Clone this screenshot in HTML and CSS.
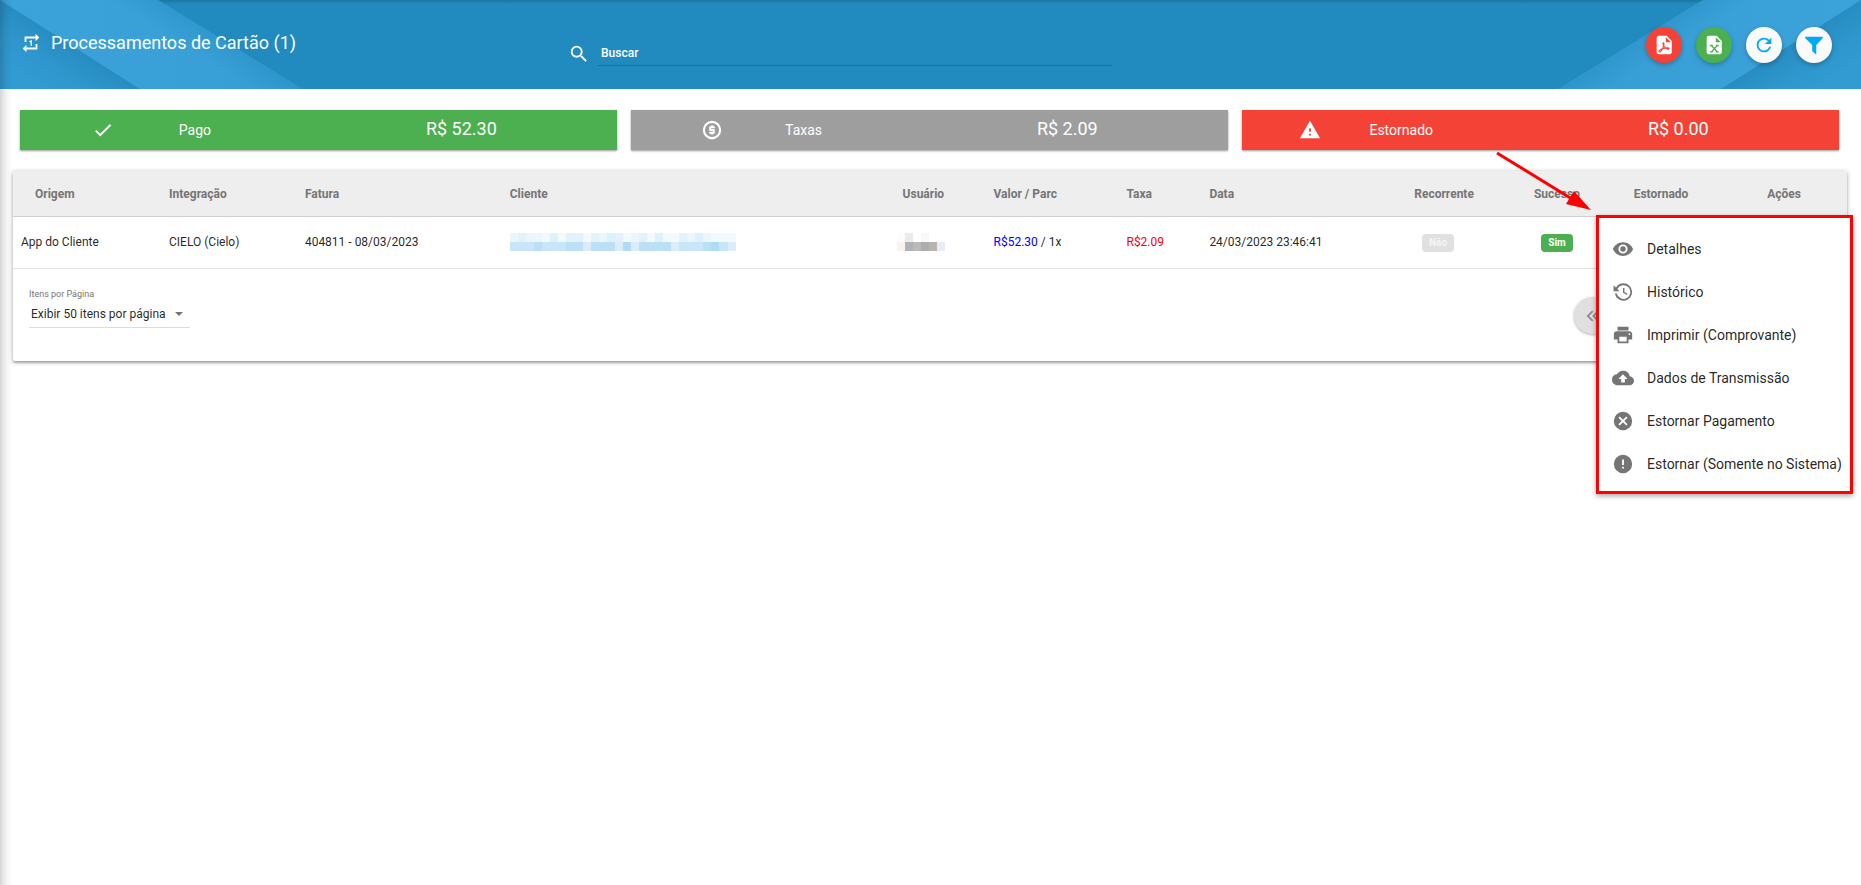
FILE: index.html
```html
<!DOCTYPE html>
<html lang="pt-BR">
<head>
<meta charset="utf-8">
<meta name="viewport" content="width=device-width, initial-scale=1">
<title>Processamentos de Cartão</title>
<link rel="stylesheet" href="styles.css">
</head>
<body>
<header class="topbar">
  <svg class="topbar-art topbar-art-left" viewBox="0 0 304 89" aria-hidden="true">
    <defs>
      <linearGradient id="band" gradientUnits="userSpaceOnUse" x1="0" y1="0" x2="304" y2="0">
        <stop offset="0" stop-color="#3ba3da"/><stop offset=".7" stop-color="#39a0d7"/><stop offset="1" stop-color="#349bd2"/>
      </linearGradient>
      <linearGradient id="corner" gradientUnits="userSpaceOnUse" x1="70" y1="44" x2="42" y2="88">
        <stop offset="0" stop-color="#278cc1"/><stop offset=".5" stop-color="#2e96cc"/><stop offset="1" stop-color="#319bd2"/>
      </linearGradient>
      <linearGradient id="edge" gradientUnits="userSpaceOnUse" x1="231" y1="44" x2="217" y2="67">
        <stop offset="0" stop-color="#238bc0" stop-opacity=".4"/><stop offset="1" stop-color="#238bc0" stop-opacity="0"/>
      </linearGradient>
    </defs>
    <path d="M0 0H158L303 89H0Z" fill="url(#band)"/>
    <path d="M158 0L303 89H0V0Z" fill="url(#edge)"/>
    <path d="M0 0L140 89H0Z" fill="url(#corner)"/>
  </svg>
  <svg class="topbar-art topbar-art-right" viewBox="0 0 304 89" aria-hidden="true">
    <path d="M0 0H158L303 89H0Z" fill="url(#band)"/>
    <path d="M158 0L303 89H0V0Z" fill="url(#edge)"/>
    <path d="M0 0L140 89H0Z" fill="url(#corner)"/>
  </svg>
  <div class="heading">
    <svg class="icon" viewBox="0 0 24 24" aria-hidden="true"><path d="M7 7h10v3l4-4-4-4v3H5v6h2V7zm10 10H7v-3l-4 4 4 4v-3h12v-6h-2v4zm-4-2V9h-1l-2 1v1h1.500v4H13z"/></svg>
    <h1 class="title">Processamentos de Cartão (1)</h1>
  </div>
  <div class="search">
    <svg class="icon" viewBox="0 0 24 24" aria-hidden="true"><path d="M15.500 14h-.79l-.28-.27A6.471 6.471 0 0 0 16 9.500 6.500 6.500 0 1 0 9.500 16c1.610 0 3.090-.59 4.230-1.570l.27.28v.79l5 4.990L20.490 19l-4.990-5zm-6 0C7.010 14 5 11.990 5 9.500S7.010 5 9.500 5 14 7.010 14 9.500 11.990 14 9.500 14z"/></svg>
    <input class="search-input" type="text" placeholder="Buscar" aria-label="Buscar">
  </div>
  <div class="actions">
    <button class="fab fab-red" type="button" aria-label="Exportar PDF">
      <svg class="icon" viewBox="0 0 24 24"><path fill="#fff" d="M6 2h9l5.500 5.500V20a2 2 0 0 1-2 2H6a2 2 0 0 1-2-2V4a2 2 0 0 1 2-2z"/><path fill="#f44336" d="M14 3.500V9h5.500z"/><path fill="none" stroke="#f44336" stroke-width="1.200" d="M7 19.500c-1.500-.8.500-2.600 4-3.600s6.500-1.100 6.600.1-3.400.5-5.300-2.200c-1.500-2.100-1.900-4.300-.9-4.300s.7 3.300-.9 6.200C9 18.500 7.800 20 7 19.500z"/></svg>
    </button>
    <button class="fab fab-green" type="button" aria-label="Exportar Excel">
      <svg class="icon" viewBox="0 0 24 24"><path fill="#fff" d="M6 2h9l5.500 5.500V20a2 2 0 0 1-2 2H6a2 2 0 0 1-2-2V4a2 2 0 0 1 2-2z"/><path fill="#4caf50" d="M14 3.500V9h5.500z"/><path fill="none" stroke="#4caf50" stroke-width="1.500" d="M7.500 12.500h3.200M14 12.500h3.200M7.500 19.500h3.200M14 19.500h3.200M9.300 12.500l6.300 7M15.600 12.500l-6.300 7"/></svg>
    </button>
    <button class="fab fab-white" type="button" aria-label="Atualizar">
      <svg class="icon" viewBox="0 0 24 24"><path d="M17.650 6.350A7.958 7.958 0 0 0 12 4a8 8 0 1 0 7.730 10h-2.080A5.990 5.990 0 0 1 12 18a6 6 0 1 1 0-12c1.660 0 3.140.69 4.220 1.780L13 11h7V4l-2.350 2.350z"/></svg>
    </button>
    <button class="fab fab-white" type="button" aria-label="Filtrar">
      <svg class="icon" viewBox="0 0 24 24"><path d="M2.500 3h19v1.500L14.500 12v10.500L10 18.500V12L2.500 4.500z"/></svg>
    </button>
  </div>
</header>

<main class="content">
  <section class="totals">
    <div class="total total-green">
      <div class="total-name">
        <span class="total-icon"><svg class="icon" viewBox="0 0 24 24" aria-hidden="true"><path d="M9 16.170L4.830 12l-1.420 1.410L9 19 21 7l-1.410-1.410z"/></svg></span>
        <span>Pago</span>
      </div>
      <div class="total-value">R$ 52.30</div>
    </div>
    <div class="total total-grey">
      <div class="total-name">
        <span class="total-icon"><svg class="icon" viewBox="0 0 24 24" aria-hidden="true"><path fill-rule="evenodd" d="M12 2a10 10 0 1 0 0 20 10 10 0 0 0 0-20zm0 2.300a7.700 7.700 0 1 1 0 15.400 7.700 7.700 0 0 1 0-15.400z"/><path d="M11 17v-1H9v-2.200h4.200v-.8H10a1 1 0 0 1-1-1V9a1 1 0 0 1 1-1h1V7h2.300v1H15v2.200h-4v.8h3a1 1 0 0 1 1 1v3a1 1 0 0 1-1 1h-.7v1H11z"/></svg></span>
        <span>Taxas</span>
      </div>
      <div class="total-value">R$ 2.09</div>
    </div>
    <div class="total total-red">
      <div class="total-name">
        <span class="total-icon"><svg class="icon" viewBox="0 0 24 24" aria-hidden="true"><path d="M1 21h22L12 2 1 21zm12-3h-2v-2h2v2zm0-4h-2v-4h2v4z"/></svg></span>
        <span>Estornado</span>
      </div>
      <div class="total-value">R$ 0.00</div>
    </div>
  </section>

  <section class="card">
    <table class="grid">
      <colgroup>
        <col class="col-origin"><col class="col-integration"><col class="col-invoice"><col class="col-client">
        <col class="col-user"><col class="col-amount"><col class="col-fee"><col class="col-date">
        <col class="col-recurring"><col class="col-success"><col class="col-refunded"><col class="col-actions">
      </colgroup>
      <thead>
        <tr>
          <th class="first">Origem</th><th>Integração</th><th>Fatura</th><th>Cliente</th><th>Usuário</th><th>Valor / Parc</th><th>Taxa</th><th>Data</th>
          <th class="center">Recorrente</th><th class="center">Sucesso</th><th class="center">Estornado</th><th class="center">Ações</th>
        </tr>
      </thead>
      <tbody>
        <tr>
          <td>App do Cliente</td>
          <td>CIELO (Cielo)</td>
          <td>404811 - 08/03/2023</td>
          <td>
            <svg class="mask" width="226" height="18" viewBox="0 0 226 18" shape-rendering="crispEdges" role="img" aria-label="Cliente oculto">
              <path fill="#ebf5fc" d="M0 0h226v9H0z"/>
              <path fill="#e2f1fb" d="M8 0h8v9H8zM56 0h17v9H56zM81 0h8v9h-8zM105 0h8v9h-8zM129 0h8v9h-8zM169 0h8v9h-8z"/>
              <path fill="#dbf1fb" d="M40 0h8v9h-8zM97 0h8v9h-8zM145 0h8v9h-8zM185 0h8v9h-8z"/>
              <path fill="#f3fafe" d="M32 0h8v9h-8zM48 0h8v9h-8zM73 0h8v9h-8zM113 0h8v9h-8zM137 0h8v9h-8zM153 0h16v9h-16zM201 0h25v9h-25z"/>
              <path fill="#c8e6f7" d="M0 9h226v9H0z"/>
              <path fill="#b9e0f5" d="M24 9h8v9h-8zM56 9h17v9H56zM89 9h8v9h-8zM145 9h16v9h-16zM193 9h8v9h-8z"/>
              <path fill="#bddff5" d="M81 9h8v9h-8zM97 9h8v9h-8zM129 9h16v9h-16z"/>
              <path fill="#dcedfa" d="M73 9h8v9h-8zM105 9h8v9h-8zM121 9h8v9h-8zM161 9h8v9h-8zM218 9h8v9h-8z"/>
              <path fill="#b0dbf5" d="M113 9h8v9h-8zM201 9h8v9h-8z"/>
            </svg>
          </td>
          <td>
            <svg class="mask mask-user" width="48" height="18" viewBox="0 0 48 18" shape-rendering="crispEdges" role="img" aria-label="Usuário oculto">
              <path fill="#fefbfa" d="M0 0h8v9H0z"/><path fill="#ebebec" d="M8 0h8v9H8z"/><path fill="#f8f8f8" d="M24 0h8v9h-8z"/>
              <path fill="#faf2ee" d="M0 9h8v9H0z"/><path fill="#b1b2b8" d="M8 9h8v9H8z"/><path fill="#bababa" d="M16 9h8v9h-8z"/>
              <path fill="#acacae" d="M24 9h8v9h-8z"/><path fill="#bab4ad" d="M32 9h8v9h-8z"/><path fill="#e9ecf7" d="M40 9h8v9h-8z"/>
            </svg>
          </td>
          <td><span class="amount">R$52.30</span> / 1x</td>
          <td class="fee">R$2.09</td>
          <td>24/03/2023 23:46:41</td>
          <td class="center recurring"><span class="badge badge-off">Não</span></td>
          <td class="center"><span class="badge badge-on">Sim</span></td>
          <td></td>
          <td></td>
        </tr>
      </tbody>
    </table>

    <footer class="pager">
      <div class="page-size">
        <label class="page-size-label" for="page-size">Itens por Página</label>
        <div class="page-size-box">
          <select class="page-size-select" id="page-size"><option>Exibir 50 itens por página</option></select>
          <span class="caret" aria-hidden="true"></span>
        </div>
      </div>
      <button class="page-first" type="button" aria-label="Primeira página">
        <svg class="icon" viewBox="0 0 24 24"><path d="M18.410 7.410L17 6l-6 6 6 6 1.410-1.410L13.830 12zM12.410 7.410L11 6l-6 6 6 6 1.410-1.410L7.830 12z"/></svg>
      </button>
    </footer>

    <svg class="pointer" width="110" height="70" viewBox="0 0 110 70" aria-hidden="true">
      <path d="M7 8L82 54" stroke="#f00" stroke-width="3"/><path d="M84 46L101 65L76 59z" fill="#f00"/>
    </svg>

    <div class="menu">
      <button class="menu-item" type="button"><svg class="icon" viewBox="0 0 24 24"><path d="M12 4.500C7 4.500 2.730 7.610 1 12c1.730 4.390 6 7.500 11 7.500s9.270-3.110 11-7.500c-1.730-4.390-6-7.500-11-7.500zM12 17a5 5 0 1 1 0-10 5 5 0 0 1 0 10zm0-8a3 3 0 1 0 0 6 3 3 0 0 0 0-6z"/></svg>Detalhes</button>
      <button class="menu-item" type="button"><svg class="icon" viewBox="0 0 24 24"><path d="M12.500 2.500a9.500 9.500 0 0 0-8.200 4.700L1.700 4.600V11.200h6.600L5.800 8.700a7.500 7.500 0 1 1-.6 5H3.100A9.500 9.500 0 1 0 12.500 2.500zM12 7.500v5.300l4.300 2.600.8-1.300-3.500-2.100V7.500z"/></svg>Histórico</button>
      <button class="menu-item" type="button"><svg class="icon" viewBox="0 0 24 24"><path d="M19 8H5c-1.660 0-3 1.340-3 3v6h4v4h12v-4h4v-6c0-1.660-1.340-3-3-3zm-3 11H8v-5h8v5zm3-7a1 1 0 1 1 0-2 1 1 0 0 1 0 2zm-1-9H6v4h12V3z"/></svg>Imprimir (Comprovante)</button>
      <button class="menu-item" type="button"><svg class="icon" viewBox="0 0 24 24"><path d="M19.350 10.040A7.490 7.490 0 0 0 12 4C9.110 4 6.600 5.640 5.350 8.040A5.994 5.994 0 0 0 0 14c0 3.310 2.690 6 6 6h13c2.760 0 5-2.240 5-5 0-2.640-2.050-4.780-4.650-4.960zM14 13v4h-4v-4H7l5-5 5 5h-3z"/></svg>Dados de Transmissão</button>
      <button class="menu-item" type="button"><svg class="icon" viewBox="0 0 24 24"><path d="M12 2a10 10 0 1 0 0 20 10 10 0 0 0 0-20zm5 13.590L15.590 17 12 13.410 8.410 17 7 15.590 10.590 12 7 8.410 8.410 7 12 10.590 15.590 7 17 8.410 13.410 12 17 15.590z"/></svg>Estornar Pagamento</button>
      <button class="menu-item" type="button"><svg class="icon" viewBox="0 0 24 24"><path d="M12 2a10 10 0 1 0 0 20 10 10 0 0 0 0-20zm1 15h-2v-2h2v2zm0-4h-2V7h2v6z"/></svg>Estornar (Somente no Sistema)</button>
    </div>
  </section>
</main>
</body>
</html>
```
FILE: styles.css
```css
* {
  box-sizing: border-box;
}

body {
  position: relative;
  min-height: 100vh;
  margin: 0;
  background: #fff;
  color: rgba(0, 0, 0, 0.87);
  font-family: Roboto, "Liberation Sans", sans-serif;
  font-size: 12px;
  line-height: 16px;
}

body::after {
  content: "";
  position: absolute;
  inset: 0 auto 0 0;
  width: 12px;
  background: linear-gradient(90deg, rgba(0, 0, 0, 0.16), rgba(0, 0, 0, 0.05) 50%, transparent);
  pointer-events: none;
}

button,
input,
select {
  margin: 0;
  border: 0;
  font: inherit;
}

.icon {
  flex: none;
  display: block;
  width: 22px;
  height: 22px;
  fill: currentColor;
}

.topbar {
  position: relative;
  display: grid;
  grid-template-columns: 547fr 545fr 720fr;
  align-items: center;
  min-height: 89px;
  padding: 0 29px 0 20px;
  background: linear-gradient(rgba(0, 0, 0, 0.15), transparent 4px), #218abf;
  color: #fff;
}

.topbar-art {
  position: absolute;
  top: 0;
  height: 100%;
}

.topbar-art-left {
  left: 0;
}

.topbar-art-right {
  right: 0;
  transform: scaleX(-1);
}

.heading,
.search,
.actions {
  position: relative;
  display: flex;
  align-items: center;
}

.heading {
  gap: 9px;
  padding-bottom: 3px;
}

.title {
  margin: 0;
  font-size: 18px;
  font-weight: 400;
  line-height: 24px;
}

.search {
  gap: 8px;
  padding: 18px 0 0 1px;
}

.search-input {
  flex: 1;
  min-width: 0;
  height: 24px;
  padding: 0 3px;
  border-bottom: 1px solid rgba(0, 0, 0, 0.18);
  background: transparent;
  color: #fff;
  font-weight: 500;
  outline: 0;
}

.search-input::placeholder {
  color: #fff;
  opacity: 1;
}

.actions {
  justify-content: flex-end;
  gap: 14px;
}

.fab {
  display: flex;
  align-items: center;
  justify-content: center;
  width: 36px;
  height: 36px;
  padding: 0;
  border-radius: 50%;
  box-shadow: 0 2px 5px rgba(0, 0, 0, 0.26);
}

.fab-red {
  background: #f44336;
}

.fab-green {
  background: #4caf50;
}

.fab-white {
  background: #fafafa;
  color: #03a9f4;
}

.totals {
  display: grid;
  grid-template-columns: repeat(3, 1fr);
  gap: 14px;
  padding: 21px 22px 21px 20px;
}

.total {
  display: flex;
  align-items: center;
  height: 40px;
  color: #fff;
  box-shadow: 0 1px 2px rgba(0, 0, 0, 0.4);
}

.total-green {
  background: #4caf50;
}

.total-grey {
  background: #9e9e9e;
}

.total-red {
  background: #f44336;
}

.total-name {
  display: flex;
  align-items: center;
  width: 32%;
  padding-left: 8px;
  font-size: 14px;
}

.total-icon {
  flex: 1;
  display: flex;
  justify-content: center;
}

.total-value {
  flex: 1;
  padding: 0 0 2px 36%;
  font-size: 18px;
  line-height: 24px;
}

.card {
  position: relative;
  margin: 0 14px 0 13px;
  border-radius: 2px;
  background: #fff;
  box-shadow: 0 1px 5px rgba(0, 0, 0, 0.3), 0 2px 2px rgba(0, 0, 0, 0.2);
}

.grid {
  width: 100%;
  table-layout: fixed;
  border-collapse: separate;
  border-spacing: 0;
}

.col-origin { width: 8.07%; }
.col-integration { width: 7.41%; }
.col-invoice { width: 11.17%; }
.col-client { width: 21.42%; }
.col-user { width: 4.96%; }
.col-amount { width: 7.25%; }
.col-fee { width: 4.52%; }
.col-date { width: 9.48%; }
.col-recurring { width: 7.51%; }
.col-success { width: 4.8%; }
.col-refunded { width: 6.55%; }
.col-actions { width: 6.86%; }

.grid th {
  height: 46px;
  padding: 0 0 0 8px;
  border-bottom: 1px solid #cfcfcf;
  background: #eee;
  color: #757575;
  font-weight: 700;
  text-align: left;
}

.grid td {
  height: 52px;
  padding: 0 0 2px 8px;
  border-bottom: 1px solid #e0e0e0;
  white-space: nowrap;
}

.grid .first {
  padding-left: 22px;
}

.grid .center {
  padding: 0;
  text-align: center;
}

.grid .recurring {
  padding-right: 12px;
}

.mask {
  display: block;
}

.mask-user {
  margin-left: -6px;
}

.amount {
  color: #00f;
}

.fee {
  color: #f00;
}

.badge {
  display: inline-block;
  padding: 1px 7px;
  border-radius: 4px;
  color: #fff;
  font-size: 10px;
  font-weight: 700;
  vertical-align: middle;
}

.badge-off {
  background: #e0e0e0;
  color: #f5f5f5;
}

.badge-on {
  background: #4caf50;
}

.pager {
  display: flex;
  align-items: flex-start;
  justify-content: space-between;
  min-height: 92px;
  padding: 18px 236px 0 16px;
}

.page-size-label {
  display: block;
  color: #757575;
  font-size: 9px;
  line-height: 14px;
}

.page-size-box {
  display: flex;
  align-items: center;
  width: 161px;
  height: 27px;
  border-bottom: 1px solid #dcdcdc;
}

.page-size-select {
  flex: 1;
  padding: 0 2px;
  appearance: none;
  background: transparent;
  color: inherit;
}

.caret {
  margin-right: 7px;
  border: 4px solid transparent;
  border-top-color: #757575;
  border-bottom: 0;
}

.page-first {
  display: flex;
  align-items: center;
  justify-content: center;
  width: 37px;
  height: 37px;
  margin-top: 10px;
  padding: 0;
  border-radius: 50%;
  background: #e0e0e0;
  color: #8c8c8c;
  box-shadow: 0 1px 3px rgba(0, 0, 0, 0.3);
}

.pointer {
  position: absolute;
  top: -26px;
  right: 247px;
}

.menu {
  position: absolute;
  top: 44px;
  right: -6px;
  display: flex;
  flex-direction: column;
  width: 257px;
  padding: 9px 0 6px;
  border: 3px solid #f00;
  background: #fff;
  box-shadow: 0 2px 5px rgba(0, 0, 0, 0.35);
}

.menu-item {
  display: flex;
  align-items: center;
  gap: 13px;
  height: 43px;
  padding: 0 0 0 13px;
  background: transparent;
  color: rgba(0, 0, 0, 0.87);
  font-size: 14px;
  white-space: nowrap;
}

.menu-item .icon {
  color: #757575;
}
```
